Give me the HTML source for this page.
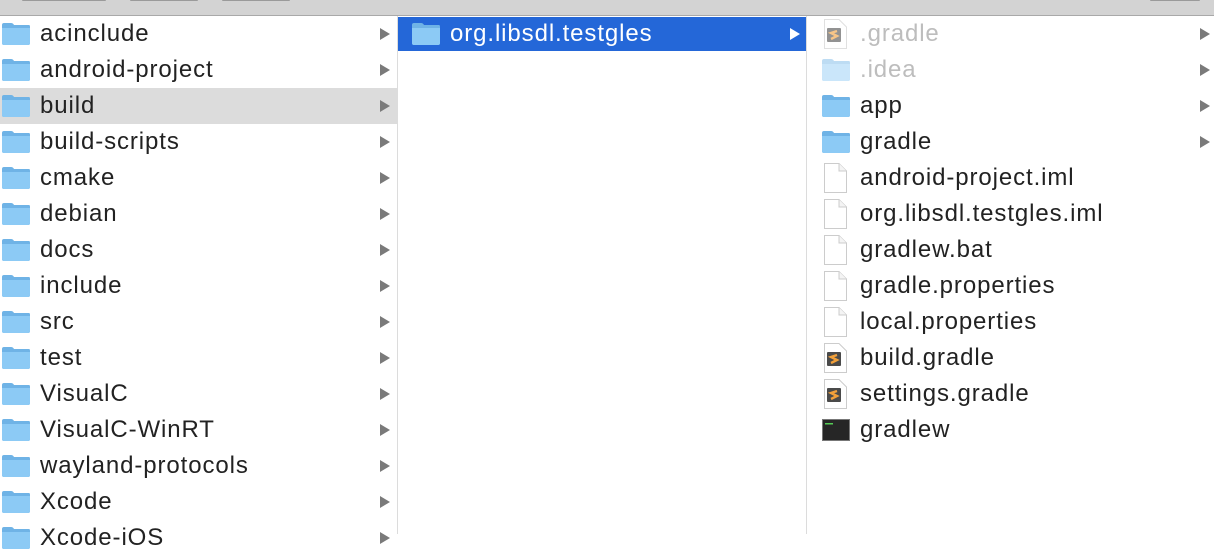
<!DOCTYPE html>
<html><head><style>
body{margin:0;width:1214px;height:534px;overflow:hidden;background:#fff;position:relative;font-family:"Liberation Sans",Helvetica,sans-serif;}
.top{position:absolute;left:0;top:0;width:1214px;height:15px;background:#d3d3d3;border-bottom:1px solid #a9a9a9;}
.btn{position:absolute;top:0;height:0;border-bottom:1px solid #9a9a9a;border-radius:0 0 4px 4px;}
.r{position:absolute;height:36px;line-height:36px;font-size:24px;letter-spacing:0.9px;color:#222;white-space:nowrap;}
.r svg{position:absolute;}
.t{position:absolute;top:0;}
.ar{position:absolute;top:12px;width:0;height:0;border-left:10px solid #7a7a7a;border-top:6px solid transparent;border-bottom:6px solid transparent;}
.div{position:absolute;top:16px;bottom:0;width:1px;background:#dcdcdc;}
</style></head><body>
<div class="top"><div class="btn" style="left:22px;width:84px"></div><div class="btn" style="left:130px;width:68px"></div><div class="btn" style="left:222px;width:68px"></div><div class="btn" style="left:1150px;width:50px"></div></div>
<div class="div" style="left:397px"></div>
<div class="div" style="left:806px"></div>
<div class="r" style="left:0;top:88px;width:397px;height:36px;background:#dcdcdc"></div>
<div class="r" style="left:398px;top:17px;width:408px;height:34px;background:#2467d8"></div>
<svg width="0" height="0" style="position:absolute"><defs>
<symbol id="f" viewBox="0 0 30 24"><path d="M1 3 Q1 1 3 1 H10 Q12 1 13 3 H28 Q29 3 29 5 V21 Q29 23 27 23 H3 Q1 23 1 21Z" fill="#6fb3e6"/><path d="M1 6 H29 V21 Q29 23 27 23 H3 Q1 23 1 21Z" fill="#8ccaf5"/></symbol>
<symbol id="d" viewBox="0 0 24 30"><path d="M1.5 .5 H16 L23.5 8 V29.5 H1.5Z" fill="#fff" stroke="#ccc"/><path d="M16 .5 V8 H23.5" fill="#f4f4f4" stroke="#ccc"/></symbol>
<symbol id="s" viewBox="0 0 24 30"><path d="M1.5 .5 H16 L23.5 8 V29.5 H1.5Z" fill="#fff" stroke="#ccc"/><rect x="4" y="9" width="14" height="14" rx="1" fill="#4a4a4a"/><path d="M14 12 L8 14 L14 17 L8 20" stroke="#f2a03a" stroke-width="2.4" fill="none"/></symbol>
</defs></svg>
<div class="r" style="left:0;top:16px;width:397px"><svg style="left:1px;top:6px" width="30" height="24"><use href="#f"/></svg><span class="t" style="left:40px">acinclude</span><i class="ar" style="left:380px"></i></div>
<div class="r" style="left:0;top:52px;width:397px"><svg style="left:1px;top:6px" width="30" height="24"><use href="#f"/></svg><span class="t" style="left:40px">android-project</span><i class="ar" style="left:380px"></i></div>
<div class="r" style="left:0;top:88px;width:397px"><svg style="left:1px;top:6px" width="30" height="24"><use href="#f"/></svg><span class="t" style="left:40px">build</span><i class="ar" style="left:380px"></i></div>
<div class="r" style="left:0;top:124px;width:397px"><svg style="left:1px;top:6px" width="30" height="24"><use href="#f"/></svg><span class="t" style="left:40px">build-scripts</span><i class="ar" style="left:380px"></i></div>
<div class="r" style="left:0;top:160px;width:397px"><svg style="left:1px;top:6px" width="30" height="24"><use href="#f"/></svg><span class="t" style="left:40px">cmake</span><i class="ar" style="left:380px"></i></div>
<div class="r" style="left:0;top:196px;width:397px"><svg style="left:1px;top:6px" width="30" height="24"><use href="#f"/></svg><span class="t" style="left:40px">debian</span><i class="ar" style="left:380px"></i></div>
<div class="r" style="left:0;top:232px;width:397px"><svg style="left:1px;top:6px" width="30" height="24"><use href="#f"/></svg><span class="t" style="left:40px">docs</span><i class="ar" style="left:380px"></i></div>
<div class="r" style="left:0;top:268px;width:397px"><svg style="left:1px;top:6px" width="30" height="24"><use href="#f"/></svg><span class="t" style="left:40px">include</span><i class="ar" style="left:380px"></i></div>
<div class="r" style="left:0;top:304px;width:397px"><svg style="left:1px;top:6px" width="30" height="24"><use href="#f"/></svg><span class="t" style="left:40px">src</span><i class="ar" style="left:380px"></i></div>
<div class="r" style="left:0;top:340px;width:397px"><svg style="left:1px;top:6px" width="30" height="24"><use href="#f"/></svg><span class="t" style="left:40px">test</span><i class="ar" style="left:380px"></i></div>
<div class="r" style="left:0;top:376px;width:397px"><svg style="left:1px;top:6px" width="30" height="24"><use href="#f"/></svg><span class="t" style="left:40px">VisualC</span><i class="ar" style="left:380px"></i></div>
<div class="r" style="left:0;top:412px;width:397px"><svg style="left:1px;top:6px" width="30" height="24"><use href="#f"/></svg><span class="t" style="left:40px">VisualC-WinRT</span><i class="ar" style="left:380px"></i></div>
<div class="r" style="left:0;top:448px;width:397px"><svg style="left:1px;top:6px" width="30" height="24"><use href="#f"/></svg><span class="t" style="left:40px">wayland-protocols</span><i class="ar" style="left:380px"></i></div>
<div class="r" style="left:0;top:484px;width:397px"><svg style="left:1px;top:6px" width="30" height="24"><use href="#f"/></svg><span class="t" style="left:40px">Xcode</span><i class="ar" style="left:380px"></i></div>
<div class="r" style="left:0;top:520px;width:397px"><svg style="left:1px;top:6px" width="30" height="24"><use href="#f"/></svg><span class="t" style="left:40px">Xcode-iOS</span><i class="ar" style="left:380px"></i></div>
<div class="r" style="left:398px;top:16px;width:408px;color:#fff"><svg style="left:13px;top:6px" width="30" height="24"><use href="#f"/></svg><span class="t" style="left:52px">org.libsdl.testgles</span><i class="ar" style="left:392px;border-left-color:#fff"></i></div>
<div class="r" style="left:808px;top:16px;width:406px;color:#bdbdbd"><svg style="left:15px;top:3px;opacity:.6" width="24" height="30"><use href="#s"/></svg><span class="t" style="left:52px">.gradle</span><i class="ar" style="left:392px"></i></div>
<div class="r" style="left:808px;top:52px;width:406px;color:#bdbdbd"><svg style="left:13px;top:6px;opacity:.45" width="30" height="24"><use href="#f"/></svg><span class="t" style="left:52px">.idea</span><i class="ar" style="left:392px"></i></div>
<div class="r" style="left:808px;top:88px;width:406px"><svg style="left:13px;top:6px" width="30" height="24"><use href="#f"/></svg><span class="t" style="left:52px">app</span><i class="ar" style="left:392px"></i></div>
<div class="r" style="left:808px;top:124px;width:406px"><svg style="left:13px;top:6px" width="30" height="24"><use href="#f"/></svg><span class="t" style="left:52px">gradle</span><i class="ar" style="left:392px"></i></div>
<div class="r" style="left:808px;top:160px;width:406px"><svg style="left:15px;top:3px" width="24" height="30"><use href="#d"/></svg><span class="t" style="left:52px">android-project.iml</span></div>
<div class="r" style="left:808px;top:196px;width:406px"><svg style="left:15px;top:3px" width="24" height="30"><use href="#d"/></svg><span class="t" style="left:52px">org.libsdl.testgles.iml</span></div>
<div class="r" style="left:808px;top:232px;width:406px"><svg style="left:15px;top:3px" width="24" height="30"><use href="#d"/></svg><span class="t" style="left:52px">gradlew.bat</span></div>
<div class="r" style="left:808px;top:268px;width:406px"><svg style="left:15px;top:3px" width="24" height="30"><use href="#d"/></svg><span class="t" style="left:52px">gradle.properties</span></div>
<div class="r" style="left:808px;top:304px;width:406px"><svg style="left:15px;top:3px" width="24" height="30"><use href="#d"/></svg><span class="t" style="left:52px">local.properties</span></div>
<div class="r" style="left:808px;top:340px;width:406px"><svg style="left:15px;top:3px" width="24" height="30"><use href="#s"/></svg><span class="t" style="left:52px">build.gradle</span></div>
<div class="r" style="left:808px;top:376px;width:406px"><svg style="left:15px;top:3px" width="24" height="30"><use href="#s"/></svg><span class="t" style="left:52px">settings.gradle</span></div>
<div class="r" style="left:808px;top:412px;width:406px"><svg style="left:14px;top:7px" width="28" height="22"><rect x=".5" y=".5" width="27" height="21" fill="#262626" stroke="#777"/><rect x="3" y="4" width="8" height="1.5" fill="#5c5"/></svg><span class="t" style="left:52px">gradlew</span></div>
</body></html>
